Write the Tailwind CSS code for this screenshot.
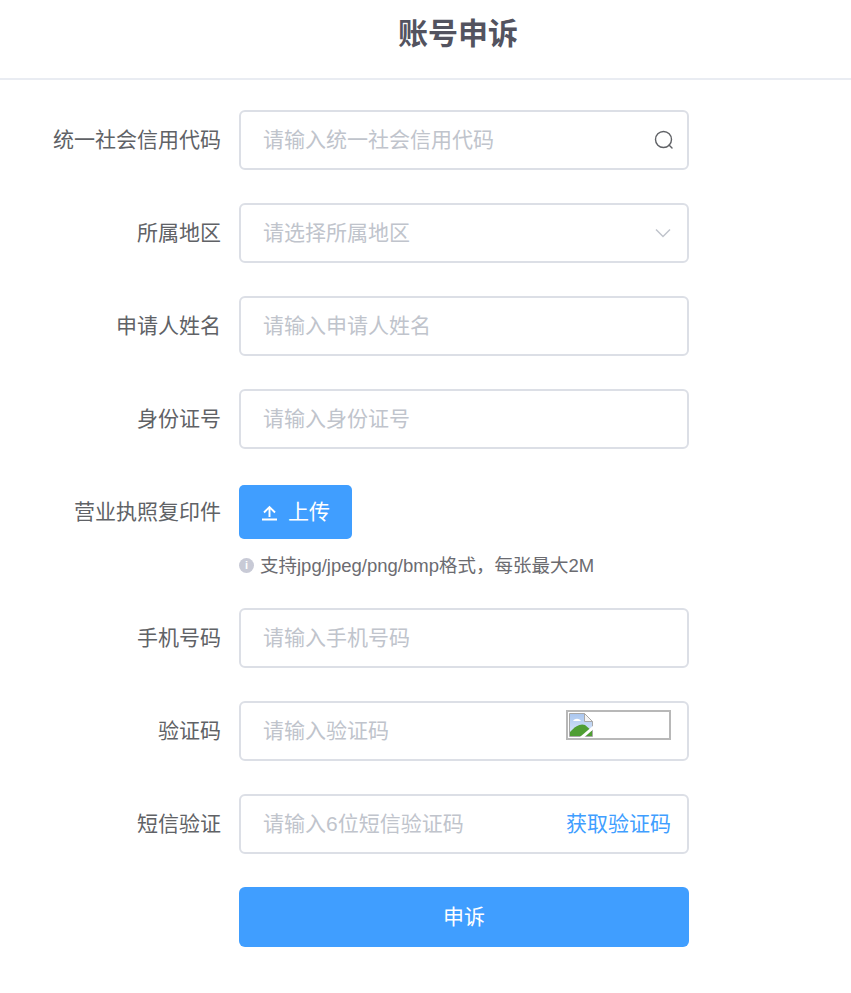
<!DOCTYPE html>
<html lang="zh-CN">
<head>
  <meta charset="UTF-8">
  <meta name="viewport" content="width=device-width, initial-scale=1.0">
  <title>账号申诉</title>
  <script src="https://cdn.jsdelivr.net/npm/@tailwindcss/browser@4"></script>
</head>
<body class="bg-white font-['Liberation_Sans','Noto_Sans_CJK_SC',sans-serif] text-[#606266]">

  <div class="h-[80px] border-b-2 border-[#e9ecf2] pl-[65px] pt-[11px] text-center">
    <h1 class="text-[30px] leading-[46px] font-bold text-[#53535f]">账号申诉</h1>
  </div>

  <form class="pt-[30px] flex flex-col gap-[33px]">
    <!-- 统一社会信用代码 -->
    <div class="flex items-center h-[60px]">
      <label class="w-[221px] text-right text-[21px]">统一社会信用代码</label>
      <div class="ml-[18px] w-[450px] h-[60px] border-2 border-[#dcdfe6] rounded-[6px] flex items-center pl-[22px] pr-[13px]">
        <input class="flex-1 min-w-0 text-[21px] outline-none placeholder:text-[#c0c4cc]" placeholder="请输入统一社会信用代码">
        <svg class="w-[20px] h-[20px]" viewBox="0 0 20 20" fill="none" stroke="#606266" stroke-width="1.4" stroke-linecap="round"><circle cx="9.500" cy="9.500" r="8"/><path d="M15 15l3 3"/></svg>
      </div>
    </div>

    <!-- 所属地区 -->
    <div class="flex items-center h-[60px]">
      <label class="w-[221px] text-right text-[21px]">所属地区</label>
      <div class="ml-[18px] w-[450px] h-[60px] border-2 border-[#dcdfe6] rounded-[6px] flex items-center pl-[22px] pr-[16px]">
        <input class="flex-1 min-w-0 text-[21px] outline-none placeholder:text-[#c0c4cc]" placeholder="请选择所属地区">
        <svg class="w-[16px] h-[10px]" viewBox="0 0 16 10" fill="none" stroke="#c0c4cc" stroke-width="1.5"><path d="M1 1.500l7 7 7-7"/></svg>
      </div>
    </div>

    <!-- 申请人姓名 -->
    <div class="flex items-center h-[60px]">
      <label class="w-[221px] text-right text-[21px]">申请人姓名</label>
      <div class="ml-[18px] w-[450px] h-[60px] border-2 border-[#dcdfe6] rounded-[6px] flex items-center pl-[22px] pr-[16px]">
        <input class="flex-1 min-w-0 text-[21px] outline-none placeholder:text-[#c0c4cc]" placeholder="请输入申请人姓名">
      </div>
    </div>

    <!-- 身份证号 -->
    <div class="flex items-center h-[60px]">
      <label class="w-[221px] text-right text-[21px]">身份证号</label>
      <div class="ml-[18px] w-[450px] h-[60px] border-2 border-[#dcdfe6] rounded-[6px] flex items-center pl-[22px] pr-[16px]">
        <input class="flex-1 min-w-0 text-[21px] outline-none placeholder:text-[#c0c4cc]" placeholder="请输入身份证号">
      </div>
    </div>

    <!-- 营业执照复印件 -->
    <div class="flex items-start mt-[3px] mb-[-2px]">
      <label class="w-[221px] text-right text-[21px] leading-[54px]">营业执照复印件</label>
      <div class="ml-[18px]">
        <button type="button" class="w-[113px] h-[54px] bg-[#409eff] rounded-[5px] text-white text-[21px] flex items-center justify-center gap-[10px]">
          <svg class="w-[17px] h-[17px]" viewBox="0 0 17 17" fill="none" stroke="#fff" stroke-width="1.9"><path d="M8.500 13V3M3 8.500l5.500-5.500 5.500 5.500M1 15.500h15"/></svg>
          <span>上传</span>
        </button>
        <div class="mt-[15px] -mb-px flex items-center gap-[6px] text-[18.5px] leading-[24px] h-[24px] text-[#6b6b70]">
          <span class="w-[15px] h-[15px] -mt-[2px] rounded-full bg-[#c8cad6] text-white text-[11px] leading-[15px] font-bold text-center">i</span>
          <span>支持jpg/jpeg/png/bmp格式，每张最大2M</span>
        </div>
      </div>
    </div>

    <!-- 手机号码 -->
    <div class="flex items-center h-[60px]">
      <label class="w-[221px] text-right text-[21px]">手机号码</label>
      <div class="ml-[18px] w-[450px] h-[60px] border-2 border-[#dcdfe6] rounded-[6px] flex items-center pl-[22px] pr-[16px]">
        <input class="flex-1 min-w-0 text-[21px] outline-none placeholder:text-[#c0c4cc]" placeholder="请输入手机号码">
      </div>
    </div>

    <!-- 验证码 -->
    <div class="flex items-center h-[60px]">
      <label class="w-[221px] text-right text-[21px]">验证码</label>
      <div class="ml-[18px] w-[450px] h-[60px] border-2 border-[#dcdfe6] rounded-[6px] flex items-start pl-[22px] pr-[16px]">
        <input class="flex-1 min-w-0 h-[56px] text-[21px] outline-none placeholder:text-[#c0c4cc]" placeholder="请输入验证码">
        <!-- 裂图占位 -->
        <div class="mt-[7px] w-[105px] h-[30px] border-2 border-[#b8b8b8] bg-white">
          <svg class="w-[26px] h-[26px]" viewBox="0 0 26 26">
            <defs>
              <linearGradient id="sky" x1="0" y1="0" x2="0" y2="1">
                <stop offset="0" stop-color="#a9c6ef"/>
                <stop offset="1" stop-color="#dfeafa"/>
              </linearGradient>
            </defs>
            <path d="M1.500 1.500h15l8 8v15h-23z" fill="url(#sky)" stroke="#a8a8a8"/>
            <path d="M16.500 1.500l8 8h-8z" fill="#f4f4f4" stroke="#a8a8a8"/>
            <path d="M5 9c2-3 6-3 8 0z" fill="#fff"/>
            <path d="M2 24v-4c5-6 11-9 15-7l7 6v5z" fill="#4f9e33"/>
            <path d="M12 27l15-13" stroke="#fff" stroke-width="3"/>
          </svg>
        </div>
      </div>
    </div>

    <!-- 短信验证 -->
    <div class="flex items-center h-[60px]">
      <label class="w-[221px] text-right text-[21px]">短信验证</label>
      <div class="ml-[18px] w-[450px] h-[60px] border-2 border-[#dcdfe6] rounded-[6px] flex items-center pl-[22px] pr-[16px]">
        <input class="flex-1 min-w-0 text-[21px] outline-none placeholder:text-[#c0c4cc]" placeholder="请输入6位短信验证码">
        <span class="text-[21px] text-[#409eff]">获取验证码</span>
      </div>
    </div>

    <!-- 申诉 -->
    <div class="pl-[239px]">
      <button type="button" class="w-[450px] h-[60px] bg-[#409eff] rounded-[6px] text-white text-[21px]">申诉</button>
    </div>
  </form>

</body>
</html>
